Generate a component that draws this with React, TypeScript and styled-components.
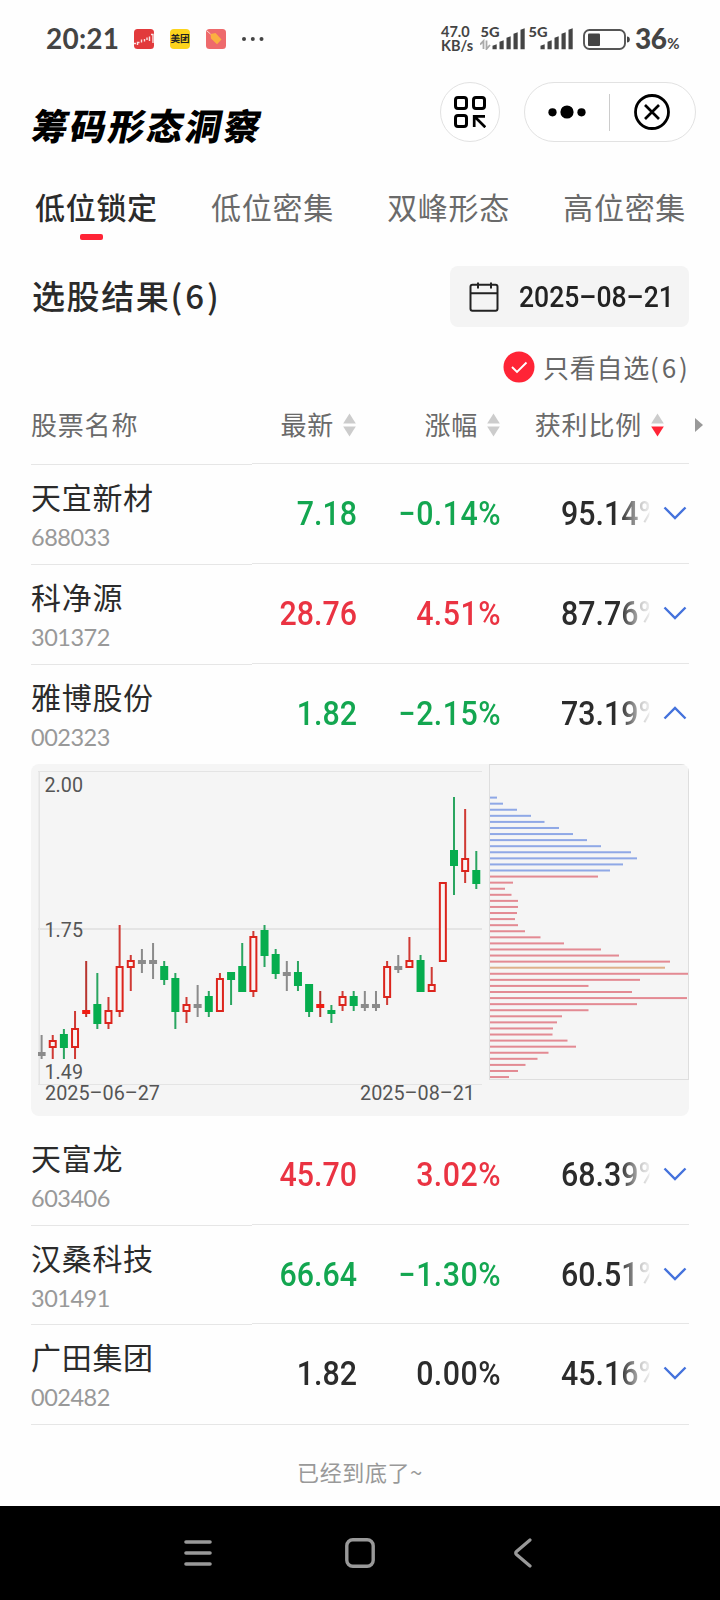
import React from "react";
import styled, { createGlobalStyle } from "styled-components";

const CJK = `"Noto Sans CJK SC", sans-serif`;
const NUM = `Roboto, "Noto Sans CJK SC", sans-serif`;
const SYS = `Lato, "Noto Sans CJK SC", sans-serif`;

const Global = createGlobalStyle`
  * { box-sizing: border-box; }
  body { margin: 0; background: #fefefe; font-family: ${CJK}; }
  svg { display: block; flex: none; }
`;

const Page = styled.main`
  width: 720px;
  height: 1600px;
  overflow: hidden;
  display: flex;
  flex-direction: column;
  background: #fefefe;
`;

/* ---------- status bar ---------- */

const StatusBar = styled.div`
  height: 78px;
  padding: 0 41px 0 46px;
  display: flex;
  align-items: center;
  color: #444;
  font-family: ${SYS};
  font-weight: 700;
`;

const Clock = styled.span`
  width: 88px;
  font-size: 28px;
  line-height: 77px;
  height: 78px;
  letter-spacing: 0.2px;
`;

const NoticeIcons = styled.div`
  display: flex;
  align-items: center;
  gap: 16px;
`;

const MeituanBadge = styled.span`
  width: 20px;
  height: 20px;
  border-radius: 4px;
  background: #fcd41c;
  color: #222;
  font: 700 9.6px/19px ${CJK};
  text-align: center;
`;

const StatusRight = styled.div`
  margin-left: auto;
  display: flex;
  align-items: center;
`;

const NetSpeed = styled.span`
  width: 39px;
  font-size: 14.5px;
  line-height: 14px;
`;

const SignalBox = styled.span`
  padding-bottom: 6px;
`;

const Percent = styled.span`
  margin-left: 5px;
  padding-top: 2px;
  font-size: 28px;
  font-weight: 900;
  letter-spacing: -0.6px;
  line-height: 40px;
  small {
    margin-left: 1px;
    font-size: 15px;
    font-weight: 700;
  }
`;

/* ---------- header ---------- */

const Header = styled.header`
  height: 96px;
  padding: 4px 24px 0 31px;
  display: flex;
  align-items: flex-start;
`;

const Title = styled.h1`
  margin: 16px auto 0 2px;
  font-size: 36px;
  line-height: 52px;
  font-weight: 900;
  letter-spacing: 2.4px;
  color: #000;
  transform: skewX(-11deg);
`;

const RoundButton = styled.button`
  width: 60px;
  height: 60px;
  margin-right: 24px;
  padding: 0;
  border: 1px solid #e2e2e2;
  border-radius: 30px;
  background: #fff;
  display: flex;
  align-items: center;
  justify-content: center;
`;

const Capsule = styled.div`
  width: 172px;
  height: 60px;
  padding-right: 1px;
  border: 1px solid #e2e2e2;
  border-radius: 30px;
  background: #fff;
  display: flex;
  align-items: center;
`;

const CapsuleHalf = styled.span`
  flex: 1;
  display: flex;
  justify-content: center;
`;

const Divider = styled.i`
  width: 1px;
  height: 37px;
  background: #ccc;
`;

/* ---------- tabs ---------- */

const Tabs = styled.nav`
  height: 76px;
  padding-left: 35px;
  display: flex;
  gap: 51.7px;
`;

const Tab = styled.a<{ $active?: boolean }>`
  width: 124.4px;
  display: flex;
  flex-direction: column;
  font-size: 30px;
  line-height: 44px;
  letter-spacing: 0.7px;
  padding-top: 10px;
  white-space: nowrap;
  color: ${(p) => (p.$active ? "#2b2b2b" : "#6a6a6a")};
  font-weight: ${(p) => (p.$active ? 500 : 400)};
  &::after {
    content: "";
    width: 23px;
    height: 6px;
    margin: 6px 0 0 45px;
    border-radius: 2px;
    background: ${(p) => (p.$active ? "#ff2436" : "transparent")};
  }
`;

/* ---------- result bar ---------- */

const ResultBar = styled.div`
  height: 93px;
  padding: 16px 31px 0 32px;
  display: flex;
  justify-content: space-between;
  align-items: flex-start;
`;

const ResultTitle = styled.h2`
  margin: 0;
  font-size: 33px;
  line-height: 58px;
  font-weight: 500;
  letter-spacing: 1.6px;
  color: #2b2b2b;
`;

const Count = styled.span<{ $spacing: number }>`
  letter-spacing: ${(p) => p.$spacing}px;
`;

const DatePicker = styled.div`
  width: 239px;
  height: 61px;
  padding: 0 0 0 19px;
  border-radius: 8px;
  background: #f4f4f4;
  display: flex;
  align-items: center;
  gap: 20px;
`;

const DateText = styled.span`
  flex: none;
  font: 500 30px/61px ${NUM};
  white-space: nowrap;
  color: #222;
  transform: scaleX(0.885);
  transform-origin: left;
`;

const Filter = styled.div`
  height: 50px;
  padding: 0 29.5px 3px 0;
  display: flex;
  justify-content: flex-end;
  align-items: center;
  gap: 8px;
  font-size: 26px;
  line-height: 36px;
  letter-spacing: 0.8px;
  color: #666;
`;

/* ---------- table ---------- */

const HeadRow = styled.div`
  height: 71px;
  padding-left: 31px;
  display: flex;
  font-size: 26px;
  letter-spacing: 0.8px;
  line-height: 62px;
  color: #6a6a6a;
`;

const HeadName = styled.div`
  width: 221px;
  height: 72px;
  border-bottom: 1px solid #e6e6e6;
`;

const HeadCells = styled.div`
  width: 437px;
  height: 71px;
  border-bottom: 1px solid #e6e6e6;
  display: flex;
`;

const HeadCell = styled.div<{ $w: number }>`
  width: ${(p) => p.$w}px;
  display: flex;
  justify-content: flex-end;
  align-items: center;
  gap: 9px;
  height: 62px;
  svg {
    margin-top: 2px;
  }
`;

const MoreArrow = styled.div`
  padding: 25px 0 0 6px;
`;

const Row = styled.div<{ $h: number }>`
  height: ${(p) => p.$h}px;
  padding: 0 31px;
  display: flex;
  flex: none;
`;

const NameCell = styled.div<{ $line: boolean; $h: number }>`
  width: 221px;
  height: ${(p) => p.$h}px;
  padding-top: 12px;
  border-bottom: 1px solid ${(p) => (p.$line ? "#e6e6e6" : "transparent")};
  flex: none;
`;

const StockName = styled.div`
  font-size: 30px;
  line-height: 40px;
  letter-spacing: 0.7px;
  color: #2b2b2b;
`;

const StockCode = styled.div`
  margin-top: 5px;
  font-family: ${SYS};
  font-size: 23.5px;
  line-height: 32px;
  letter-spacing: -0.5px;
  color: #999;
`;

const Values = styled.div<{ $line: boolean; $h: number }>`
  width: 437px;
  height: ${(p) => p.$h}px;
  border-bottom: 1px solid ${(p) => (p.$line ? "#e6e6e6" : "transparent")};
  display: flex;
  align-items: flex-start;
  font: 500 33px/100px ${NUM};
`;

const tones = { up: "#ea3342", down: "#13a650", flat: "#2b2b2b" };
type Tone = keyof typeof tones;

const Value = styled.span<{ $w: number; $tone: Tone; $spacing?: number }>`
  width: ${(p) => p.$w}px;
  display: flex;
  justify-content: flex-end;
  letter-spacing: ${(p) => p.$spacing ?? 0}px;
  color: ${(p) => tones[p.$tone]};
  transform: scaleX(0.92);
  transform-origin: right;
`;

const fade = `linear-gradient(90deg, #000 64px, rgba(0, 0, 0, 0.45) 82px, rgba(0, 0, 0, 0.25) 86px, rgba(0, 0, 0, 0.1) 95px, transparent 97px)`;

const Ratio = styled.span`
  flex: none;
  width: 110px;
  margin-left: 60px;
  white-space: nowrap;
  color: #2b2b2b;
  transform: scaleX(0.92);
  transform-origin: left;
  -webkit-mask-image: ${fade};
  mask-image: ${fade};
`;

const Toggle = styled.span`
  flex: none;
  margin: 42px 0 0 -8px;
`;

const ChartPanel = styled.section`
  width: 658px;
  height: 352px;
  margin: 0 31px 9px;
  border-radius: 8px;
  background: #f5f5f5;
  overflow: hidden;
  flex: none;
`;

const EndNote = styled.p`
  margin: 0;
  height: 82px;
  padding-top: 30px;
  text-align: center;
  font-size: 22px;
  line-height: 34px;
  letter-spacing: 0.6px;
  color: #999;
`;

const NavBar = styled.footer`
  height: 94px;
  flex: none;
  background: #000;
  display: flex;
  align-items: center;
  padding-left: 184px;
`;

const NavKey = styled.span<{ $gap: number }>`
  margin-right: ${(p) => p.$gap}px;
`;

/* ---------- icons ---------- */

const StockAppIcon = () => (
  <svg width="20" height="20" viewBox="0 0 20 20">
    <rect width="20" height="20" rx="3.5" fill="#e23a3c" />
    <path d="M0 14.500h2M3.500 16v-2.500h2M7.500 13.500v-3M10.500 12.500v-2.500M13 11V8.500M15.500 12V7.500M17 5.500h2v8.500" stroke="#fff" strokeWidth="1.400" fill="none" opacity=".85" />
  </svg>
);

const TagAppIcon = () => (
  <svg width="20" height="20" viewBox="0 0 20 20">
    <rect width="20" height="20" rx="3.500" fill="#ee6a6c" />
    <path d="M4.500 5l5-1 6 6.500-4.500 4.800L5 9.500z" fill="#fbb040" />
    <path d="M1 2l3.500 3" stroke="#fbd9d0" strokeWidth="1" />
  </svg>
);

const DotsIcon = () => (
  <svg width="22" height="6" viewBox="0 0 22 6" fill="#444">
    <circle cx="2" cy="3" r="2" />
    <circle cx="10.800" cy="3" r="2" />
    <circle cx="19.500" cy="3" r="2" />
  </svg>
);

const SIGNAL_HEIGHTS = [5, 9, 13, 17, 21];

const Signal = ({ width, barX, arrows }: { width: number; barX: number; arrows?: boolean }) => (
  <SignalBox>
    <svg width={width} height="28" viewBox={`0 0 ${width} 28`} fill="#444">
      <text x="0.500" y="14.500" fontSize="14" fontWeight="900" textLength="19" lengthAdjust="spacingAndGlyphs">5G</text>
      {arrows && (
        <path d="M0 22.500l3.500-3.500V27M6.500 18.500V27l3.500-4" fill="none" stroke="#aaa" strokeWidth="1.800" />
      )}
      {SIGNAL_HEIGHTS.map((h, i) => {
        const x = barX + i * 7;
        return <path key={h} d={`M${x} ${27.3 - h + 1.5}L${x + 4.2} ${27.3 - h}V27.300H${x}Z`} />;
      })}
    </svg>
  </SignalBox>
);

const Battery = () => (
  <svg width="47" height="21" viewBox="0 0 47 21">
    <rect x="1" y="1" width="41" height="19" rx="5.500" fill="none" stroke="#555" strokeWidth="1.900" />
    <rect x="5" y="4.500" width="12" height="12.500" rx="1" fill="#444" />
    <path d="M44 7.500q2.800 0 2.800 3t-2.800 3z" fill="#444" />
  </svg>
);

const ScanIcon = () => (
  <svg width="32" height="32" viewBox="0 0 32 32" fill="none" stroke="#000" strokeWidth="3">
    <rect x="1.500" y="1.500" width="11" height="11" rx="2.500" />
    <rect x="19.500" y="1.500" width="11" height="11" rx="2.500" />
    <rect x="1.500" y="19.500" width="11" height="11" rx="2.500" />
    <path d="M31 20.300H20.200V31M20.500 20.500L31.300 31.300" strokeWidth="2.700" />
  </svg>
);

const MoreIcon = () => (
  <svg width="38" height="14" viewBox="0 0 38 14">
    <circle cx="4.500" cy="7.300" r="4.100" />
    <circle cx="19" cy="7" r="6.600" />
    <circle cx="33.500" cy="7.300" r="4.100" />
  </svg>
);

const CloseIcon = () => (
  <svg width="36" height="36" viewBox="0 0 36 36" fill="none" stroke="#000">
    <circle cx="18" cy="18" r="16.500" strokeWidth="2.800" />
    <path d="M11 11l14 14M25 11L11 25" strokeWidth="2.700" />
  </svg>
);

const CalendarIcon = () => (
  <svg width="30" height="30" viewBox="0 0 30 30" fill="none" stroke="#222" strokeWidth="2">
    <rect x="1.500" y="2.700" width="27" height="26" rx="2" />
    <path d="M1.500 11.200h27M9 .5v6M22 .5v6" />
  </svg>
);

const CheckIcon = () => (
  <svg width="32" height="32" viewBox="0 0 32 32">
    <circle cx="16" cy="16" r="15.500" fill="#ff2436" />
    <path d="M9 16l5 5 9.500-9.500" fill="none" stroke="#fff" strokeWidth="1.900" />
  </svg>
);

const SortIcon = ({ desc }: { desc?: boolean }) => (
  <svg width="13" height="24" viewBox="0 0 13 24">
    <path d="M6.500 .5L12.800 10.500H.2z" fill="#ccc" />
    <path d="M6.500 23.500L12.800 13.500H.2z" fill={desc ? "#ff2436" : "#ccc"} />
  </svg>
);

const Chevron = ({ up }: { up?: boolean }) => (
  <svg width="24" height="14" viewBox="0 0 24 14" fill="none" stroke="#4472dc" strokeWidth="2.400">
    <path d={up ? "M1.500 12.500L12 2l10.500 10.500" : "M1.500 1.500L12 12 22.500 1.500"} />
  </svg>
);

/* ---------- chart ---------- */

type Kind = "r" | "g" | "n" | "s";
// [kind, high, body top, body bottom, low] in panel pixels; r = hollow rise, s = thin rise, g = fall, n = unchanged
const CANDLES: [Kind, number, number, number, number][] = [
  ["n", 271, 288, 292, 295], ["r", 271, 276, 284, 295], ["g", 265, 270, 284, 295], ["r", 247, 264, 284, 295],
  ["s", 197, 246, 250, 253], ["g", 209, 240, 260, 265], ["r", 233, 246, 260, 265], ["r", 161, 202, 248, 253],
  ["r", 191, 196, 204, 227], ["n", 185, 196, 200, 209], ["n", 179, 196, 200, 215], ["g", 197, 202, 216, 221],
  ["g", 209, 214, 248, 265], ["r", 233, 240, 248, 259], ["n", 221, 240, 244, 253], ["g", 227, 232, 248, 253],
  ["r", 209, 214, 248, 248], ["g", 208, 208, 216, 241], ["g", 179, 202, 228, 228], ["r", 167, 172, 228, 233],
  ["g", 161, 166, 192, 203], ["g", 185, 190, 210, 215], ["n", 197, 208, 212, 227], ["g", 197, 208, 222, 227],
  ["g", 220, 220, 248, 253], ["s", 227, 240, 244, 253], ["g", 241, 246, 250, 259], ["r", 227, 232, 242, 247],
  ["g", 227, 232, 242, 247], ["n", 227, 240, 244, 247], ["n", 227, 240, 244, 247], ["r", 197, 202, 234, 241],
  ["n", 191, 202, 206, 209], ["r", 173, 196, 204, 204], ["g", 191, 196, 228, 228], ["r", 203, 220, 228, 228],
  ["r", 118, 118, 198, 198], ["g", 33, 86, 102, 131], ["r", 45, 94, 108, 119], ["g", 87, 106, 120, 125],
];
const KIND_COLOR: Record<Kind, string> = { r: "#dc241c", s: "#f01c12", g: "#06ad4e", n: "#8b8b8b" };
const WICK_COLOR: Record<Kind, string> = { r: "#cf3a34", s: "#b8352f", g: "#2aa560", n: "#8b8b8b" };

const CHIPS_ABOVE = [7, 13, 27, 41, 54.5, 69, 83, 97, 111, 141, 147, 133, 120];
const CHIPS_BELOW = [
  108, 23, 15, 21.5, 28, 28, 27, 25, 28, 35, 50.5, 74, 111, 129, 180, 175, 198, 150, 98.5, 142, 197, 147, 98.5, 72,
  67, 63, 62.5, 77.5, 86, 58.5, 47.5, 35.5, 28, 19,
];
const CHIPS = [...CHIPS_ABOVE, ...CHIPS_BELOW];
const AVERAGE_INDEX = 28;

const chipColor = (i: number) =>
  i < CHIPS_ABOVE.length ? "#8fa8e6" : i === AVERAGE_INDEX ? "#dfb08a" : "#e38a93";

const ChipChart = () => (
  <svg width="658" height="352" viewBox="0 0 658 352">
    <g fill="#e4e4e4">
      <rect x="7" y="7" width="444" height="1" />
      <rect x="7" y="164" width="444" height="2" />
      <rect x="7" y="320" width="444" height="1" />
      <rect x="7.500" y="7" width="1.500" height="314" />
    </g>
    <g fontFamily="Roboto, sans-serif" fontSize="20.500" fill="#555">
      <text x="13.500" y="28" textLength="38.500" lengthAdjust="spacingAndGlyphs">2.00</text>
      <text x="13.500" y="172.500" textLength="38.500" lengthAdjust="spacingAndGlyphs">1.75</text>
      <text x="13.500" y="315" textLength="38.500" lengthAdjust="spacingAndGlyphs">1.49</text>
      <text x="14" y="336" textLength="115" lengthAdjust="spacingAndGlyphs">2025–06–27</text>
      <text x="329" y="336" textLength="115" lengthAdjust="spacingAndGlyphs">2025–08–21</text>
    </g>
    {CANDLES.map(([kind, high, top, bottom, low], i) => {
      const x = 10.6 + i * 11.146;
      return (
        <g key={i}>
          {high < top && <rect x={x - 1} y={high} width="2" height={top - high} fill={WICK_COLOR[kind]} />}
          {low > bottom && <rect x={x - 1} y={bottom} width="2" height={low - bottom} fill={WICK_COLOR[kind]} />}
          {kind === "r" ? (
            <rect x={x - 3} y={top + 1} width="6" height={bottom - top - 2} fill="#f9f3f3" stroke={KIND_COLOR.r} strokeWidth="2" />
          ) : (
            <rect x={Math.max(x - 4, 7)} y={top} width={i === 0 ? 7.6 : 8} height={bottom - top} fill={KIND_COLOR[kind]} />
          )}
        </g>
      );
    })}
    <rect x="458.500" y=".5" width="199" height="315" fill="none" stroke="#dedede" />
    {CHIPS.map((w, i) => (
      <rect key={i} x="459" y={32.6 + i * 6.075} width={w} height="2" fill={chipColor(i)} />
    ))}
  </svg>
);

/* ---------- data ---------- */

interface Stock {
  name: string;
  code: string;
  price: string;
  change: string;
  ratio: string;
  tone: Tone;
  open?: boolean;
}

const STOCKS: Stock[] = [
  { name: "天宜新材", code: "688033", price: "7.18", change: "−0.14%", ratio: "95.14%", tone: "down" },
  { name: "科净源", code: "301372", price: "28.76", change: "4.51%", ratio: "87.76%", tone: "up" },
  { name: "雅博股份", code: "002323", price: "1.82", change: "−2.15%", ratio: "73.19%", tone: "down", open: true },
  { name: "天富龙", code: "603406", price: "45.70", change: "3.02%", ratio: "68.39%", tone: "up" },
  { name: "汉桑科技", code: "301491", price: "66.64", change: "−1.30%", ratio: "60.51%", tone: "down" },
  { name: "广田集团", code: "002482", price: "1.82", change: "0.00%", ratio: "45.16%", tone: "flat" },
];

const TABS = ["低位锁定", "低位密集", "双峰形态", "高位密集"];

export default function App() {
  return (
    <Page>
      <Global />
      <StatusBar>
        <Clock>20:21</Clock>
        <NoticeIcons>
          <StockAppIcon />
          <MeituanBadge>美团</MeituanBadge>
          <TagAppIcon />
          <DotsIcon />
        </NoticeIcons>
        <StatusRight>
          <NetSpeed>47.0 KB/s</NetSpeed>
          <Signal width={48} barX={12.5} arrows />
          <Signal width={55} barX={12.5} />
          <Battery />
          <Percent>36<small>%</small></Percent>
        </StatusRight>
      </StatusBar>

      <Header>
        <Title>筹码形态洞察</Title>
        <RoundButton><ScanIcon /></RoundButton>
        <Capsule>
          <CapsuleHalf><MoreIcon /></CapsuleHalf>
          <Divider />
          <CapsuleHalf><CloseIcon /></CapsuleHalf>
        </Capsule>
      </Header>

      <Tabs>
        {TABS.map((t, i) => (
          <Tab key={t} $active={i === 0}>{t}</Tab>
        ))}
      </Tabs>

      <ResultBar>
        <ResultTitle>选股结果<Count $spacing={3}>(6)</Count></ResultTitle>
        <DatePicker>
          <CalendarIcon />
          <DateText>2025–08–21</DateText>
        </DatePicker>
      </ResultBar>

      <Filter>
        <CheckIcon />
        <span>只看自选<Count $spacing={2.8}>(6)</Count></span>
      </Filter>

      <HeadRow>
        <HeadName>股票名称</HeadName>
        <HeadCells>
          <HeadCell $w={104}>最新<SortIcon /></HeadCell>
          <HeadCell $w={144}>涨幅<SortIcon /></HeadCell>
          <HeadCell $w={164}>获利比例<SortIcon desc /></HeadCell>
        </HeadCells>
        <MoreArrow>
          <svg width="8" height="14" viewBox="0 0 8 14"><path d="M0 0l8 7-8 7z" fill="#999" /></svg>
        </MoreArrow>
      </HeadRow>

      {STOCKS.map((s, i) => {
        const h = i === 4 ? 99 : 100;
        const last = i === STOCKS.length - 1;
        return (
          <React.Fragment key={s.code}>
            <Row $h={h}>
              <NameCell $line={!s.open} $h={h + 1}>
                <StockName>{s.name}</StockName>
                <StockCode>{s.code}</StockCode>
              </NameCell>
              <Values $line={!s.open} $h={last ? h + 1 : h}>
                <Value $w={105} $tone={s.tone}>{s.price}</Value>
                <Value $w={144} $tone={s.tone} $spacing={0.5}>{s.change}</Value>
                <Ratio>{s.ratio}</Ratio>
                <Toggle><Chevron up={s.open} /></Toggle>
              </Values>
            </Row>
            {s.open && <ChartPanel><ChipChart /></ChartPanel>}
          </React.Fragment>
        );
      })}

      <EndNote>已经到底了~</EndNote>

      <NavBar>
        <NavKey $gap={133}>
          <svg width="28" height="28" viewBox="0 0 28 28" stroke="#999" strokeWidth="3.600" strokeLinecap="round">
            <path d="M2 3h24M2 14h24M2 25h24" />
          </svg>
        </NavKey>
        <NavKey $gap={138}>
          <svg width="30" height="30" viewBox="0 0 30 30">
            <rect x="1.800" y="1.800" width="26.400" height="26.400" rx="6" fill="none" stroke="#999" strokeWidth="3.400" />
          </svg>
        </NavKey>
        <NavKey $gap={0}>
          <svg width="20" height="30" viewBox="0 0 20 30" fill="none" stroke="#999" strokeWidth="3.200" strokeLinecap="round">
            <path d="M17 2L3.500 13.500q-1.600 1.500 0 3L17 28" />
          </svg>
        </NavKey>
      </NavBar>
    </Page>
  );
}
